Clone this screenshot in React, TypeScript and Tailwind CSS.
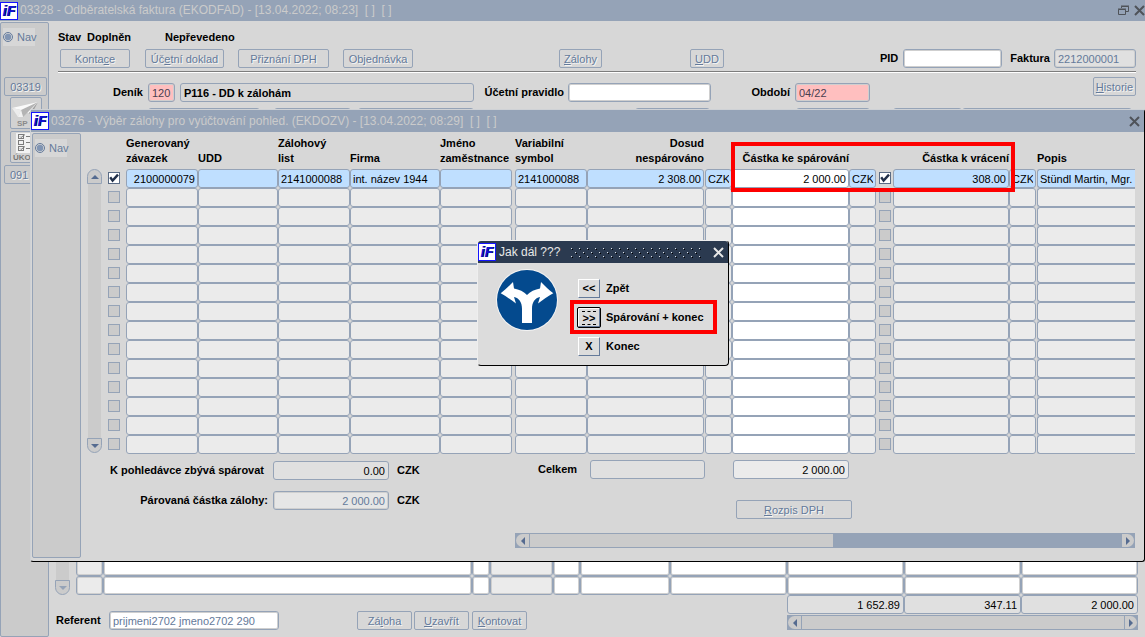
// src/pages/InvoiceSettlementPage.tsx
import React from 'react';

type Column = {
  key: string;
  label: string[];
  width: string;
  align?: 'right';
  kind?: 'check';
  editable?: boolean;
  pad?: string;
  open?: boolean;
};

const COLUMNS: Column[] = [
  { key: 'sel', label: [], width: 'w-[21px]', kind: 'check' },
  { key: 'zavazek', label: ['Generovaný', 'závazek'], width: 'w-[72px]', align: 'right' },
  { key: 'udd', label: ['UDD'], width: 'w-[80px]' },
  { key: 'list', label: ['Zálohový', 'list'], width: 'w-[72px]' },
  { key: 'firma', label: ['Firma'], width: 'w-[90px]' },
  { key: 'jmeno', label: ['Jméno', 'zaměstnance'], width: 'w-[72px]' },
  { key: 'symbol', label: ['Variabilní', 'symbol'], width: 'w-[75px]', pad: 'pl-[3px]' },
  { key: 'dosud', label: ['Dosud', 'nespárováno'], width: 'w-[117px]', align: 'right' },
  { key: 'mena1', label: [], width: 'w-[28px]', pad: 'pl-px' },
  { key: 'sparovat', label: ['Částka ke spárování'], width: 'w-[117px]', align: 'right', editable: true },
  { key: 'mena2', label: [], width: 'w-[27px]' },
  { key: 'vratit', label: [], width: 'w-[17px]', kind: 'check' },
  { key: 'vraceni', label: ['Částka k vrácení'], width: 'w-[116px]', align: 'right' },
  { key: 'mena3', label: [], width: 'w-[27px]' },
  { key: 'popis', label: ['Popis'], width: 'w-auto', pad: 'pl-px', open: true },
];

const FIRST_ROW: Record<string, string> = {
  zavazek: '2100000079',
  list: '2141000088',
  firma: 'int. název 1944',
  symbol: '2141000088',
  dosud: '2 308.00',
  mena1: 'CZK',
  sparovat: '2 000.00',
  mena2: 'CZK',
  vraceni: '308.00',
  mena3: 'CZK',
  popis: 'Stündl Martin, Mgr.',
};

const ROWS: Array<Record<string, string>> = [FIRST_ROW, ...Array.from({ length: 14 }, () => ({}))];

const LINE_COLUMNS = [
  { width: 'w-[27px]', bg: 'bg-[#ebebeb]' },
  { width: 'w-[369px]', bg: 'bg-white' },
  { width: 'w-[18px]', bg: 'bg-white' },
  { width: 'w-[63px]', bg: 'bg-[#ebebeb]' },
  { width: 'w-[27px]', bg: 'bg-white' },
  { width: 'w-[90px]', bg: 'bg-white' },
  { width: 'w-[117px]', bg: 'bg-white' },
  { width: 'w-[117px]', bg: 'bg-white' },
  { width: 'w-[117px]', bg: 'bg-white' },
  { width: 'w-auto', bg: 'bg-white' },
];

const Logo: React.FC = () => (
  <svg viewBox="0 0 18 18" className="w-[18px] h-[18px] shrink-0" aria-hidden="true">
    <rect x="0.5" y="0.5" width="17" height="17" fill="#fff" stroke="#1414ff" />
    <text x="3.500" y="14" fontFamily="Liberation Sans, sans-serif" fontSize="14" fontWeight="700" fontStyle="italic" fill="#000a50">iF</text>
    <text x="2.500" y="14" fontFamily="Liberation Sans, sans-serif" fontSize="14" fontWeight="700" fontStyle="italic" fill="#1010d8">iF</text>
  </svg>
);

const CloseIcon: React.FC<{ className?: string }> = ({ className = '' }) => (
  <svg viewBox="0 0 11 11" className={`w-[11px] h-[11px] ${className}`} fill="none" stroke="currentColor" strokeWidth="2">
    <path d="M1 1l9 9M10 1l-9 9" />
  </svg>
);

// text with one underlined access key
const Hot: React.FC<{ text: string; at?: number }> = ({ text, at = 0 }) => (
  <span>{text.slice(0, at)}<u>{text.slice(at, at + 1)}</u>{text.slice(at + 1)}</span>
);

const FormButton: React.FC<{ text: string; at?: number; className?: string }> = ({ text, at, className = '' }) => (
  <button type="button" className={`h-[19px] pt-px shrink-0 rounded-[2px] border border-[#95a3b7] text-[#647a9a] [text-shadow:1px_1px_0_#f4f4f4] ${className}`}>
    <Hot text={text} at={at} />
  </button>
);

const FIELD = 'h-[19px] rounded-[3px] border border-[#95a3b7] px-[3px] outline-none';
const INSET = 'shadow-[inset_0_0_0_1px_#cfcfcf]';

const Check: React.FC<{ label: string; on: boolean }> = ({ label, on }) => {
  const [checked, setChecked] = React.useState(on);
  return (
    <label className="grid w-3 h-3 ml-[3px] mb-[2px]">
      <input
        type="checkbox"
        aria-label={label}
        checked={checked}
        onChange={(e) => setChecked(e.target.checked)}
        className="appearance-none col-start-1 row-start-1 w-3 h-3 border border-[#95a3b7] bg-[#cbcbcb] checked:border-[#5a6b85] checked:bg-white"
      />
      {checked && (
        <svg viewBox="0 0 12 12" className="col-start-1 row-start-1 w-3 h-3 pointer-events-none" fill="none" stroke="#22304a" strokeWidth="2.4">
          <path d="M2.2 5.2l2.4 3.4L10 2.6" />
        </svg>
      )}
    </label>
  );
};

const VScroll: React.FC<{ up?: boolean }> = ({ up = true }) => (
  <div className="flex flex-col w-[15px] h-full">
    {up && (
      <button type="button" aria-label="Nahoru" className="grid place-items-center h-[15px] shrink-0 border border-[#95a3b7] rounded-t-full bg-[#cbcbcb]">
        <svg viewBox="0 0 8 4" className="w-2 h-1" fill="#556b90"><path d="M4 0l4 4H0z" /></svg>
      </button>
    )}
    <div className="flex-1 mx-px bg-[#cbcbcb]" />
    <button type="button" aria-label="Dolů" className="grid place-items-center h-[15px] shrink-0 border border-[#95a3b7] rounded-b-full bg-[#cbcbcb]">
      <svg viewBox="0 0 8 4" className="w-2 h-1" fill={up ? '#556b90' : '#95a3b7'}><path d="M0 0h8L4 4z" /></svg>
    </button>
  </div>
);

const HScroll: React.FC<{ thumb?: boolean }> = ({ thumb }) => (
  <div className="flex h-[15px] border border-[#95a3b7] bg-[#95a3b7]">
    <button type="button" aria-label="Vlevo" className="grid place-items-center w-[13px] shrink-0 rounded-l-full bg-[#cbcbcb]">
      <svg viewBox="0 0 4 8" className="w-1 h-2" fill="#556b90"><path d="M4 0v8L0 4z" /></svg>
    </button>
    <div className={`ml-px bg-[#cbcbcb] ${thumb ? 'w-[49%]' : 'flex-1'}`} />
    <button type="button" aria-label="Vpravo" className="grid place-items-center w-[13px] shrink-0 ml-auto rounded-r-full bg-[#cbcbcb] border-l border-[#95a3b7]">
      <svg viewBox="0 0 4 8" className="w-1 h-2" fill="#556b90"><path d="M0 0v8l4-4z" /></svg>
    </button>
  </div>
);

const NavItem: React.FC = () => (
  <button type="button" className="flex items-center gap-1 w-8 h-[18px] shrink-0 bg-[#d7d7d7] text-[#647a9a]">
    <svg viewBox="0 0 10 10" className="w-[10px] h-[10px] shrink-0">
      <circle cx="5" cy="5" r="4.5" fill="#d7d7d7" stroke="#647a9a" />
      <circle cx="5" cy="5" r="3.2" fill="#8195b3" />
    </svg>
    Nav
  </button>
);

const ToolIcons: React.FC = () => (
  <>
    <button type="button" aria-label="SP" className="w-8 h-8 shrink-0 ml-[7px] mt-px rounded-[2px] border border-[#95a3b7] bg-[#d2d2d2]">
      <svg viewBox="0 0 30 30" className="w-[30px] h-[30px]">
        <path d="M1 10L27 4 18 15 10 12z" fill="#fafafa" />
        <path d="M1 10l9 2-3 7z" fill="#ececec" />
        <path d="M10 12L27 4 12 19z" fill="#b4b4b4" />
        <path d="M18 15L27 4l-7 13z" fill="#9c9c9c" />
        <path d="M7 19l3-7 2 7z" fill="#f2f2f2" />
        <text x="6" y="28" fontFamily="Liberation Sans, sans-serif" fontSize="8" fontWeight="700" fill="#8a8a8a">SP</text>
      </svg>
    </button>
    <button type="button" aria-label="ÚKO" className="w-8 h-8 shrink-0 ml-[7px] mt-[2px] rounded-[2px] border border-[#95a3b7] bg-[#d2d2d2]">
      <svg viewBox="0 0 30 30" className="w-[30px] h-[30px]">
        <rect x="5" y="1" width="20" height="20" fill="#f2f2f2" />
        <g fill="none" stroke="#7c7c7c">
          <rect x="7.5" y="2.5" width="5" height="4" />
          <rect x="7.5" y="8.5" width="5" height="4" />
          <rect x="7.5" y="14.5" width="5" height="4" />
          <path d="M9 4.500l1 1 4-3M9 16.500l1 1 4-3M15 4.500h8M15 10.500h8M15 16.500h8" />
        </g>
        <text x="2" y="28" fontFamily="Liberation Sans, sans-serif" fontSize="8" fontWeight="700" fill="#777">ÚKO</text>
      </svg>
    </button>
  </>
);

const AdvanceTable: React.FC = () => (
  <table className="w-full table-fixed border-separate border-spacing-0">
    <colgroup>
      {COLUMNS.map((c) => <col key={c.key} className={c.width} />)}
    </colgroup>
    <thead>
      <tr className="h-9">
        {COLUMNS.map((c) => (
          <th key={c.key} className={`p-0 pb-[3px] align-bottom font-bold whitespace-nowrap leading-[15px] ${c.align === 'right' && c.key !== 'zavazek' ? 'text-right' : 'text-left'} ${c.pad ?? ''}`}>
            {c.label.map((l) => <div key={l}>{l}</div>)}
          </th>
        ))}
      </tr>
    </thead>
    <tbody>
      {ROWS.map((row, i) => (
        <tr key={i} className="h-[19px]">
          {COLUMNS.map((c) => (
            <td key={c.key} className={`p-0 ${c.pad ?? ''}`}>
              {c.kind === 'check' ? (
                <Check label={`${c.key} ${i + 1}`} on={i === 0} />
              ) : (
                <input
                  aria-label={`${c.label.join(' ') || 'Měna'} ${i + 1}`}
                  defaultValue={row[c.key] ?? ''}
                  readOnly={!c.editable}
                  className={`block w-full h-[19px] px-[2px] border border-[#95a3b7] outline-none ${
                    c.open ? 'rounded-l-[3px] border-r-0' : 'rounded-[3px]'} ${
                    c.align === 'right' ? 'text-right' : ''} ${
                    c.editable ? 'bg-white' : i === 0 ? 'bg-[#bfdfff]' : 'bg-[#ebebeb]'}`}
                />
              )}
            </td>
          ))}
        </tr>
      ))}
    </tbody>
  </table>
);

const CHOICES = [
  { sign: '<<', label: 'Zpět' },
  { sign: '>>', label: 'Spárování + konec' },
  { sign: 'X', label: 'Konec' },
];

const ChoiceDialog: React.FC = () => (
  <div role="dialog" aria-label="Jak dál ???" className="absolute left-[477px] top-[240px] w-[252px] rounded-[4px] border border-t-[#eee] border-l-[#eee] border-r-black border-b-black bg-[#dcdcdc] overflow-hidden">
    <div className="flex items-center h-[22px] pr-1 bg-[#2b3a50] text-[#e8e8e8] text-[12px]">
      <Logo />
      <span className="w-[74px] pl-[3px] whitespace-nowrap">Jak dál ???</span>
      <svg className="flex-1 h-[11px]" aria-hidden="true">
        <defs>
          <pattern id="grip" width="8" height="8" patternUnits="userSpaceOnUse">
            <path d="M1 1h1v1H1zM5 5h1v1H5z" fill="#dfe4ea" />
            <path d="M2 2h1v1H2zM6 6h1v1H6z" fill="#000" />
          </pattern>
        </defs>
        <rect width="100%" height="11" fill="url(#grip)" />
      </svg>
      <button type="button" aria-label="Zavřít" className="ml-[10px]"><CloseIcon /></button>
    </div>
    <div className="flex pt-[6px] pb-[9px] pl-[18px]">
      <svg viewBox="0 0 62 62" className="w-[62px] h-[62px] shrink-0">
        <circle cx="31" cy="31" r="31" fill="#f4f4f4" />
        <circle cx="31" cy="31" r="30" fill="#044a8e" />
        <path
          fill="#fff"
          d="M26 54V40c0-7-3-11-8-12l2 6.500C15 31 10 27 4.700 24.300 9 21 13 17 17 13l1 6.500c5 1 10 3 13 6.500 3-3.500 8-5.500 13-6.500l1-6.500c4 4 8 8 12.300 11.300C52 27 47 31 42 34.500L44 28c-5 1-8 5-8 12v14z"
        />
      </svg>
      <div className="flex flex-col pt-[10px] pl-4 gap-[10px]">
        {CHOICES.map((c) => (
          <label key={c.sign} className="flex items-center gap-[6px] pl-1 font-bold whitespace-nowrap">
            <button
              type="button"
              aria-label={c.label}
              className={`w-[22px] h-[19px] border border-t-white border-l-white border-r-[#647a9a] border-b-[#647a9a] bg-[#dcdcdc] ${c.sign === '>>' ? 'rounded-[1px] outline outline-black' : ''}`}
            >
              <span className={c.sign === '>>' ? 'block mx-[3px] h-[14px] leading-[12px] border-y border-dashed border-black' : ''}>{c.sign}</span>
            </button>
            {c.label}
          </label>
        ))}
      </div>
    </div>
  </div>
);

const AdvanceWindow: React.FC = () => (
  <section className="absolute left-[30px] right-0 top-[109px] rounded-[3px] border border-t-[#cfd2d6] border-l-[#cfd2d6] border-r-black border-b-black bg-[#d7d7d7]">
    <div className="flex items-center h-[22px] pr-1 bg-[#95a3b7] text-[#cbcbcb] text-[12px]">
      <Logo />
      <h2 className="flex-1 pl-[2px] whitespace-pre">03276 - Výběr zálohy pro vyúčtování pohled. (EKDOZV) - [13.04.2022; 08:29]  [ ]  [ ]</h2>
      <button type="button" aria-label="Zavřít" className="text-[#4f5359]"><CloseIcon /></button>
    </div>
    <div className="flex pt-px pl-px pb-[3px]">
      <aside className="w-[49px] shrink-0 pl-[2px] pt-[5px] rounded-[2px] border border-[#95a3b7] bg-[#cbcbcb]">
        <NavItem />
      </aside>
      <div className="flex-1 min-w-0 pl-[6px] pr-[9px] pb-[10px]">
        <div className="flex gap-[3px]">
          <div className="pt-9 pb-px shrink-0"><VScroll /></div>
          <AdvanceTable />
        </div>
        <div className="flex pl-[18px]">
          <div className="w-[410px] shrink-0 flex flex-col gap-[11px] pt-[7px]">
            <div className="flex items-center font-bold">
              <label htmlFor="zbyva" className="w-[168px] pr-[9px] text-right">K pohledávce zbývá spárovat</label>
              <input id="zbyva" readOnly defaultValue="0.00" className={`${FIELD} w-[116px] bg-[#e0e0e0] text-right font-normal`} />
              <span className="pl-2">CZK</span>
            </div>
            <div className="flex items-center font-bold">
              <label htmlFor="parovana" className="w-[168px] pr-[5px] text-right">Párovaná částka zálohy:</label>
              <input id="parovana" readOnly defaultValue="2 000.00" className={`${FIELD} ${INSET} w-[116px] bg-[#e6e6e6] text-right font-normal text-[#647a9a]`} />
              <span className="pl-2">CZK</span>
            </div>
          </div>
          <div className="flex-1 min-w-0 pt-[6px]">
            <div className="flex items-center">
              <label htmlFor="celkem" className="w-[75px] pl-[23px] font-bold">Celkem</label>
              <input id="celkem" readOnly className={`${FIELD} w-[115px] bg-[#e0e0e0]`} />
              <input aria-label="Celkem ke spárování" readOnly defaultValue="2 000.00" className={`${FIELD} w-[116px] ml-7 bg-[#ebebeb] text-right`} />
            </div>
            <FormButton text="Rozpis DPH" className="block w-[116px] mt-[21px] ml-[221px]" />
            <div className="mt-[14px]"><HScroll thumb /></div>
          </div>
        </div>
      </div>
    </div>
  </section>
);

const App: React.FC = () => (
  <div className="relative flex flex-col min-h-screen overflow-hidden bg-[#d7d7d7] text-black text-[11px] leading-[15px] font-['Liberation_Sans',Arial,sans-serif]">
    <header className="flex items-center h-[21px] shrink-0 bg-[#95a3b7] text-[#cbcbcb] text-[12px]">
      <Logo />
      <h1 className="flex-1 pl-[2px] whitespace-pre">03328 - Odběratelská faktura (EKODFAD) - [13.04.2022; 08:23]  [ ]  [ ]</h1>
      <button type="button" aria-label="Obnovit" className="text-[#4f5359]">
        <svg viewBox="0 0 11 11" className="w-[11px] h-[11px]" fill="none" stroke="currentColor">
          <path d="M3.500 3V1.500h7v5H8M3 1h8M.5 4.500h7v5h-7zM0 4h8" />
        </svg>
      </button>
      <button type="button" aria-label="Zavřít" className="ml-[5px] text-[#4f5359]"><CloseIcon /></button>
    </header>

    <div className="flex flex-1">
      <aside className="flex flex-col w-[49px] shrink-0 mt-px pt-[5px] pl-[2px] rounded-[2px] border border-[#95a3b7] bg-[#cbcbcb]">
        <NavItem />
        <FormButton text="03319" at={9} className="w-[43px] ml-px mt-[31px]" />
        <ToolIcons />
        <FormButton text="091" at={9} className="w-[43px] ml-px mt-[2px] pl-[5px] text-left" />
      </aside>

      <main className="flex flex-col justify-between flex-1 min-w-0">
        <div className="pl-[9px] pr-[9px]">
          <div className="flex pt-[9px] font-bold">
            <span className="w-[29px]">Stav</span>
            <span className="w-[78px]">Doplněn</span>
            <span>Nepřevedeno</span>
          </div>
          <div className="flex items-center pt-1 pl-[2px] pb-[3px]">
            <FormButton text="Kontace" at={5} className="w-[70px]" />
            <FormButton text="Účetní doklad" at={2} className="w-[79px] ml-[15px]" />
            <FormButton text="Přiznání DPH" at={12} className="w-[91px] ml-[14px]" />
            <FormButton text="Objednávka" at={10} className="w-[70px] ml-[14px]" />
            <FormButton text="Zálohy" className="w-[43px] ml-[146px]" />
            <FormButton text="UDD" className="w-[34px] ml-[88px]" />
            <label htmlFor="pid" className="ml-auto mr-[5px] font-bold">PID</label>
            <input id="pid" className={`${FIELD} ${INSET} w-[99px] bg-white`} />
            <label htmlFor="faktura" className="ml-2 mr-1 font-bold">Faktura</label>
            <input id="faktura" readOnly defaultValue="2212000001" className={`${FIELD} ${INSET} w-[82px] bg-[#e0e0e0] text-[#647a9a]`} />
          </div>
          <div className="h-[2px] mb-[8px] bg-white border-t border-[#7d7d7d]" />
          <div className="flex items-center">
            <label htmlFor="denik" className="w-[90px] pr-[5px] text-right font-bold">Deník</label>
            <input id="denik" defaultValue="120" className={`${FIELD} ${INSET} w-[27px] bg-[#ffbfbf] text-[#4a4050]`} />
            <input aria-label="Název deníku" readOnly defaultValue="P116 - DD k zálohám" className={`${FIELD} w-[294px] ml-[5px] font-bold`} />
            <label htmlFor="pravidlo" className="w-[94px] pr-[4px] text-right font-bold">Účetní pravidlo</label>
            <input id="pravidlo" className={`${FIELD} ${INSET} w-[143px] bg-white`} />
            <label htmlFor="obdobi" className="w-[84px] pr-[5px] text-right font-bold">Období</label>
            <input id="obdobi" defaultValue="04/22" className={`${FIELD} ${INSET} w-[75px] bg-[#ffbfbf] text-[#4a4050]`} />
            <FormButton text="Historie" className="w-[43px] ml-auto mb-2 -mt-1" />
          </div>
          <div className="flex pt-1 pl-[90px]">
            <input aria-label="Pole 1" className={`${FIELD} w-[112px]`} />
            <input aria-label="Pole 2" className={`${FIELD} w-[77px] ml-[14px]`} />
            <input aria-label="Pole 3" className={`${FIELD} w-[116px] ml-[7px]`} />
            <input aria-label="Pole 4" className={`${FIELD} w-[75px] ml-[161px]`} />
            <input aria-label="Pole 5" className={`${FIELD} w-[74px] ml-[86px]`} />
            <input aria-label="Pole 6" className={`${FIELD} w-[69px] ml-auto`} />
            <input aria-label="Pole 7" className={`${FIELD} w-[170px] mr-1`} />
          </div>
        </div>

        <div className="pl-[6px] pr-[7px] pb-[7px]">
          <div className="flex">
            <div className="w-[21px] shrink-0"><VScroll up={false} /></div>
            <table className="w-full table-fixed border-separate border-spacing-0">
              <colgroup>
                {LINE_COLUMNS.map((c, i) => <col key={i} className={c.width} />)}
              </colgroup>
              <tbody>
                {[1, 2].map((r) => (
                  <tr key={r}>
                    {LINE_COLUMNS.map((c, i) => (
                      <td key={i} className="p-0">
                        <input aria-label={`Řádek ${r}, sloupec ${i + 1}`} className={`block w-full h-[19px] rounded-[3px] border border-[#95a3b7] px-[3px] outline-none ${INSET} ${c.bg}`} />
                      </td>
                    ))}
                  </tr>
                ))}
              </tbody>
            </table>
          </div>
          <div className="flex items-end">
            <div className="flex items-center">
              <label htmlFor="referent" className="w-[54px] pl-px font-bold">Referent</label>
              <input id="referent" defaultValue="prijmeni2702 jmeno2702 290" className={`${FIELD} ${INSET} w-[170px] bg-white text-[#647a9a]`} />
              <FormButton text="Záloha" at={2} className="w-[55px] ml-[78px]" />
              <FormButton text="Uzavřít" className="w-[55px] ml-[2px]" />
              <FormButton text="Kontovat" className="w-[55px] ml-[3px]" />
            </div>
            <div className="w-[351px] ml-auto">
              <div className="grid grid-cols-3">
                {['1 652.89', '347.11', '2 000.00'].map((v, i) => (
                  <input key={v} aria-label={`Součet ${i + 1}`} readOnly defaultValue={v} className={`${FIELD} w-full bg-[#e0e0e0] text-right`} />
                ))}
              </div>
              <div className="mt-px"><HScroll /></div>
            </div>
          </div>
        </div>
      </main>
    </div>

    <AdvanceWindow />

    {/* highlighted amounts */}
    <div className="absolute left-[731px] top-[142px] w-[284px] h-[50px] border-4 border-[#fe0000] pointer-events-none" />
    <ChoiceDialog />
    <div className="absolute left-[570px] top-[300px] w-[147px] h-[34px] border-4 border-[#fe0000] pointer-events-none" />
  </div>
);

export default App;
